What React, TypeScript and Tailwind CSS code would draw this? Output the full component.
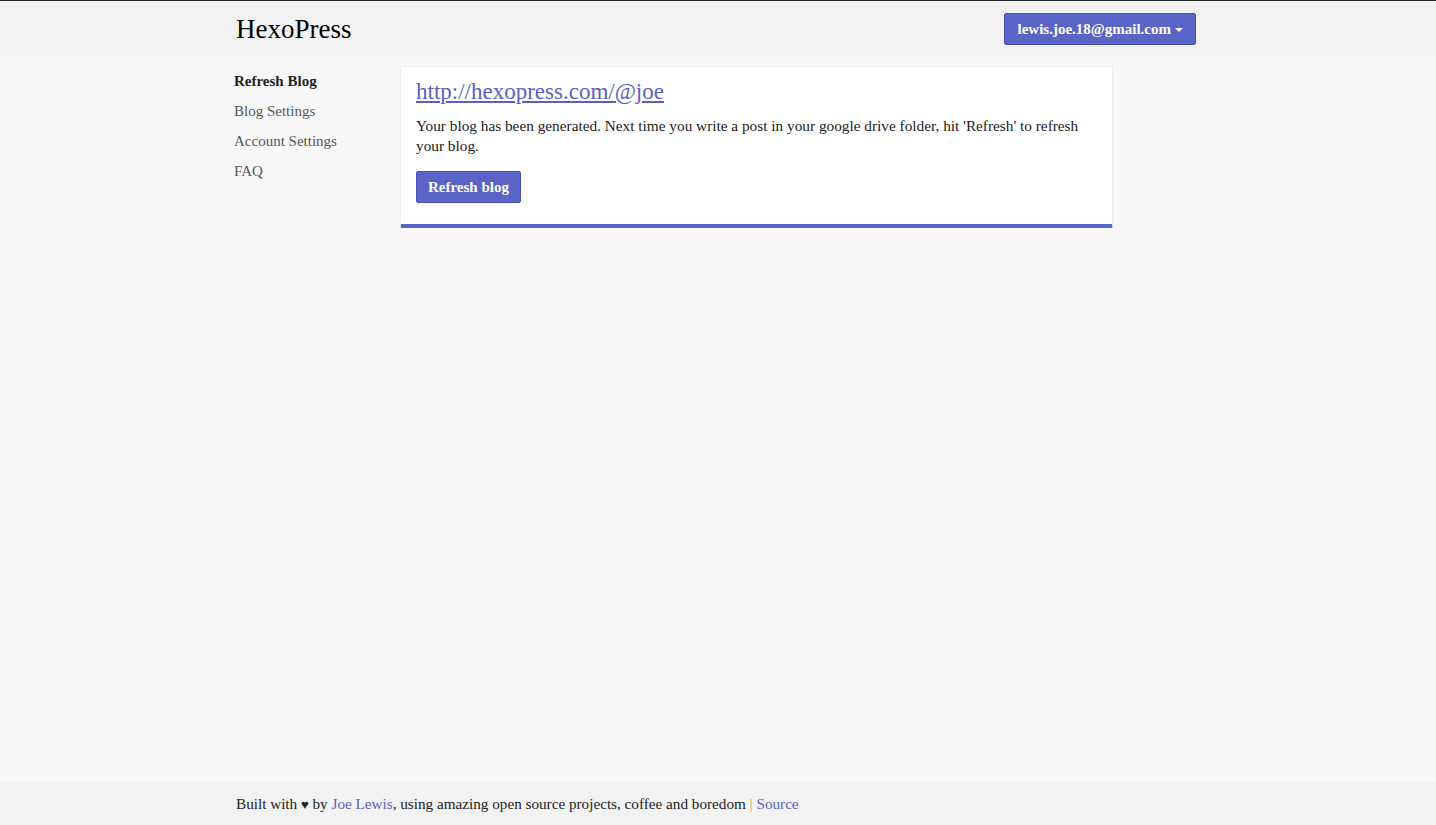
export default function App() {
  const navItems = ["Refresh Blog", "Blog Settings", "Account Settings", "FAQ"];

  return (
    <div
      className="min-h-screen flex flex-col bg-[#f8f8f8] text-[#222]"
      style={{ fontFamily: '"Liberation Serif", "DejaVu Serif", serif' }}
    >
      {/* Header */}
      <header className="bg-[#f2f2f2] border-t border-[#222] h-[56px]">
        <div className="w-[968px] pr-[6px] mx-auto h-full flex items-center justify-between">
          <div className="text-[27px] text-black pl-[2px] pt-[1px]">HexoPress</div>
          <button className="h-[32px] px-[12px] bg-[#5a63c6] border border-[#4a52b5] rounded-[2px] text-white text-[15px] font-bold flex items-center gap-[4px] mt-[1px]">
            lewis.joe.18@gmail.com
            <span className="inline-block w-0 h-0 border-l-[4px] border-r-[4px] border-t-[4px] border-l-transparent border-r-transparent border-t-white mt-[2px]" />
          </button>
        </div>
      </header>

      {/* Main */}
      <main className="flex-1">
        <div className="w-[968px] pr-[6px] mx-auto flex pt-[10px]">
          <nav className="w-[166px] flex flex-col">
            {navItems.map((item, i) => (
              <a
                key={item}
                href="#"
                className={`text-[15px] leading-[30px] ${i === 0 ? "font-bold text-[#222]" : "text-[#555]"}`}
              >
                {item}
              </a>
            ))}
          </nav>
          <div className="w-[713px] bg-white border border-[#ececec] border-b-[4px] border-b-[#5a63c6] rounded-b-[2px] px-[15px] pt-[11px] pb-[21px]">
            <a href="#" className="text-[23px] text-[#5a5fc4] underline leading-[28px]">
              http://hexopress.com/@joe
            </a>
            <p className="text-[15.3px] leading-[20px] mt-[10px] text-[#222]">
              Your blog has been generated. Next time you write a post in your google drive folder, hit 'Refresh' to refresh your blog.
            </p>
            <button className="mt-[15px] h-[32px] px-[11px] bg-[#5a63c6] border border-[#4a52b5] rounded-[2px] text-white text-[15px] font-bold">
              Refresh blog
            </button>
          </div>
        </div>
      </main>

      {/* Footer */}
      <footer className="bg-[#f2f2f2] h-[42px]">
        <div className="w-[968px] pr-[6px] mx-auto h-full flex items-center text-[15.2px] text-[#222] pl-[2px] pt-[1px]">
          <span>
            Built with <span className="text-[13px]">♥</span> by{" "}
            <a href="#" className="text-[#5a5fc4]">Joe Lewis</a>, using amazing open source projects, coffee and boredom{" "}
            <span className="text-[#e0a060]">|</span>{" "}
            <a href="#" className="text-[#5a5fc4]">Source</a>
          </span>
        </div>
      </footer>
    </div>
  );
}
